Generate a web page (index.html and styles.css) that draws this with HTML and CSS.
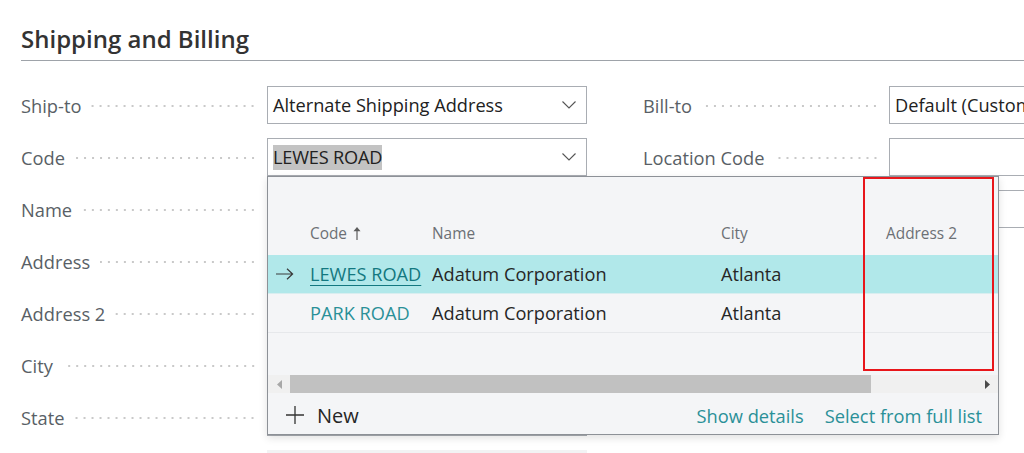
FILE: index.html
```html
<!DOCTYPE html>
<html lang="en">
<head>
    <meta charset="UTF-8">
    <title>Shipping and Billing</title>
    <link rel="stylesheet" href="styles.css">
</head>
<body>
    <div class="page">
        <h2 class="section-title">Shipping and Billing</h2>

        <div class="form">
            <div class="col">
                <div class="field">
                    <div class="lead"><span class="label">Ship-to</span><span class="dots"></span></div>
                    <div class="box">
                        <span>Alternate Shipping Address</span>
                        <svg class="chevron" width="14" height="8" viewBox="0 0 14 8"><polyline points="0.5,0.5 7,7 13.5,0.5" fill="none" stroke="#555" stroke-width="1.1"/></svg>
                    </div>
                </div>
                <div class="field">
                    <div class="lead"><span class="label">Code</span><span class="dots"></span></div>
                    <div class="box box-open">
                        <span class="selection">LEWES ROAD</span>
                        <svg class="chevron" width="14" height="8" viewBox="0 0 14 8"><polyline points="0.5,0.5 7,7 13.5,0.5" fill="none" stroke="#555" stroke-width="1.1"/></svg>

                        <div class="lookup">
                            <div class="lookup-head">
                                <div></div>
                                <div class="cell">Code <svg class="sort" width="8" height="13" viewBox="0 0 8 13"><path d="M4 2.5v10.5" stroke="#5c5c5c" stroke-width="1.2"/><path d="M4 0L7.5 4.2H0.5z" fill="#5c5c5c"/></svg></div>
                                <div class="cell">Name</div>
                                <div class="cell">City</div>
                                <div class="cell">Address 2</div>
                            </div>
                            <div class="lookup-row current">
                                <div class="gutter"><svg width="18" height="12" viewBox="0 0 18 12"><path d="M0 6h16.5M11 0.7l5.6 5.3-5.6 5.3" fill="none" stroke="#3a3a3a" stroke-width="1.2"/></svg></div>
                                <div class="cell"><a class="code-link underline" href="#">LEWES ROAD</a></div>
                                <div class="cell">Adatum Corporation</div>
                                <div class="cell">Atlanta</div>
                                <div class="cell"></div>
                            </div>
                            <div class="lookup-row">
                                <div class="gutter"></div>
                                <div class="cell"><a class="code-link" href="#">PARK ROAD</a></div>
                                <div class="cell">Adatum Corporation</div>
                                <div class="cell">Atlanta</div>
                                <div class="cell"></div>
                            </div>
                            <div class="lookup-space"></div>
                            <div class="hscroll">
                                <div class="hscroll-btn"><svg width="5" height="9" viewBox="0 0 5 9"><path d="M5 0v9L0 4.5z" fill="#a8a8a8"/></svg></div>
                                <div class="hscroll-thumb"></div>
                                <div class="hscroll-track"></div>
                                <div class="hscroll-btn"><svg width="5" height="9" viewBox="0 0 5 9"><path d="M0 0v9L5 4.5z" fill="#4a4a4a"/></svg></div>
                            </div>
                            <div class="lookup-foot">
                                <a class="new-btn" href="#"><svg width="18" height="18" viewBox="0 0 18 18"><path d="M9 0v18M0 9h18" stroke="#333" stroke-width="1.3"/></svg>New</a>
                                <div class="foot-links">
                                    <a href="#">Show details</a>
                                    <a href="#">Select from full list</a>
                                </div>
                            </div>
                            <div class="highlight"></div>
                        </div>
                    </div>
                </div>
                <div class="field">
                    <div class="lead"><span class="label">Name</span><span class="dots"></span></div>
                    <div class="box"></div>
                </div>
                <div class="field">
                    <div class="lead"><span class="label">Address</span><span class="dots"></span></div>
                    <div class="box"></div>
                </div>
                <div class="field">
                    <div class="lead"><span class="label">Address 2</span><span class="dots"></span></div>
                    <div class="box"></div>
                </div>
                <div class="field">
                    <div class="lead"><span class="label">City</span><span class="dots"></span></div>
                    <div class="box"></div>
                </div>
                <div class="field">
                    <div class="lead"><span class="label">State</span><span class="dots"></span></div>
                    <div class="box"></div>
                </div>
                <div class="field">
                    <div class="lead"></div>
                    <div class="box box-readonly"></div>
                </div>
            </div>

            <div class="col">
                <div class="field">
                    <div class="lead"><span class="label">Bill-to</span><span class="dots"></span></div>
                    <div class="box box-wide"><span>Default (Customer)</span></div>
                </div>
                <div class="field">
                    <div class="lead"><span class="label">Location Code</span><span class="dots"></span></div>
                    <div class="box box-wide"></div>
                </div>
                <div class="field">
                    <div class="lead"><span class="label">Shipment Date</span><span class="dots"></span></div>
                    <div class="box box-wide"></div>
                </div>
            </div>
        </div>
    </div>
</body>
</html>
```

FILE: styles.css
```css
body {
    margin: 0;
    font-family: "Open Sans", "Noto Sans", sans-serif;
    color: #212121;
    background: #fff;
    overflow: hidden;
}
a {
    text-decoration: none;
}
.page {
    padding: 24px 0 0 21px;
}
.section-title {
    margin: 0;
    font-size: 24px;
    font-weight: 600;
    line-height: 30px;
    color: #333;
    padding-bottom: 6px;
    border-bottom: 1px solid #9ea3a9;
}
.form {
    display: flex;
    gap: 56px;
    margin-top: 25px;
}
.col {
    flex: none;
    width: 566px;
}
.field {
    display: flex;
    align-items: center;
    height: 38px;
    margin-bottom: 14px;
}
.lead {
    width: 246px;
    display: flex;
    align-items: center;
    flex: none;
}
.label {
    font-size: 18.3px;
    color: #595f66;
    white-space: nowrap;
}
.dots {
    flex: 1;
    height: 4px;
    margin: 2px 10px 0 10px;
    background-image: radial-gradient(circle, #c9c9c9 0.9px, transparent 1.4px);
    background-size: 8px 4px;
    background-position: right center;
}
.box {
    position: relative;
    width: 321px;
    height: 38px;
    box-sizing: border-box;
    border: 1px solid #a9adb3;
    background: #fff;
    display: flex;
    align-items: center;
    padding: 0 5px;
    font-size: 18.2px;
    white-space: nowrap;
}
.box-wide {
    width: 340px;
}
.box-readonly {
    background: #f2f3f4;
    border-color: #f2f3f4;
}
.chevron {
    margin-left: auto;
    margin-right: 5px;
}
.selection {
    background: #c3c3c3;
    line-height: 25px;
    letter-spacing: -0.2px;
}

/* lookup dropdown */
.lookup {
    position: absolute;
    z-index: 10;
    top: calc(100% + 1px);
    left: -1px;
    width: 732px;
    height: 259px;
    box-sizing: border-box;
    border: 1px solid #8d9197;
    background: #f4f5f7;
    box-shadow: 0 3px 8px rgba(0, 0, 0, 0.12);
    display: flex;
    flex-direction: column;
    overflow: hidden;
    white-space: nowrap;
}
.lookup-head,
.lookup-row {
    display: grid;
    grid-template-columns: 38px 122px 289px 165px 200px;
    flex: none;
}
.lookup-head {
    height: 78px;
    align-items: end;
    box-sizing: border-box;
    padding-bottom: 11px;
    font-size: 15.4px;
    color: #6c7075;
}
.cell {
    padding-left: 4px;
}
.sort {
    margin-left: 2px;
    vertical-align: -1px;
}
.lookup-row {
    height: 39px;
    box-sizing: border-box;
    border-bottom: 1px solid #e6e8eb;
    align-items: center;
    font-size: 18.2px;
    color: #262626;
}
.lookup-row.current {
    background: #b1e8ea;
    border-bottom-color: #d9eef0;
}
.gutter {
    display: flex;
    align-items: center;
    padding-left: 8px;
}
.code-link {
    color: #2a9098;
}
.code-link.underline {
    color: #137880;
    text-decoration: underline;
    text-underline-offset: 4px;
}
.lookup-space {
    flex: 1;
}
.hscroll {
    display: flex;
    height: 18px;
    flex: none;
    background: #f0f0f0;
}
.hscroll-btn {
    width: 22px;
    display: flex;
    align-items: center;
    justify-content: center;
}
.hscroll-thumb {
    width: 581px;
    background: #c1c1c1;
}
.hscroll-track {
    flex: 1;
}
.lookup-foot {
    height: 41px;
    flex: none;
    box-sizing: border-box;
    display: flex;
    align-items: center;
    padding: 3px 16px 0 18px;
    font-size: 18.3px;
}
.new-btn {
    display: flex;
    align-items: center;
    gap: 13px;
    color: #262626;
    font-size: 20px;
}
.foot-links {
    margin-left: auto;
    display: flex;
    gap: 21px;
}
.foot-links a {
    color: #2a9098;
}
.highlight {
    position: absolute;
    left: 595px;
    top: 0;
    width: 131px;
    height: 194px;
    box-sizing: border-box;
    border: 2px solid #e8161b;
}
```
